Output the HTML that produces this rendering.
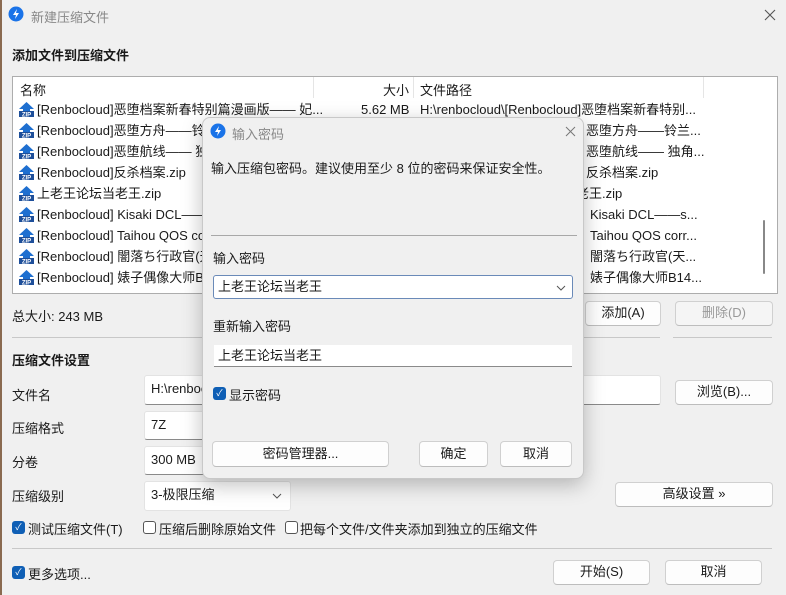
<!DOCTYPE html>
<html><head><meta charset="utf-8"><style>
*{margin:0;padding:0;box-sizing:border-box}
body{width:786px;height:595px;background:#f0f0f0;font-family:"Liberation Sans","Noto Sans CJK SC",sans-serif;font-size:13px;color:#1a1a1a;position:relative;overflow:hidden}
.a{position:absolute;white-space:nowrap}
.b{font-weight:bold}
.btn{position:absolute;background:#fdfdfd;border:1px solid #d0d0d0;border-bottom-color:#bdbdbd;border-radius:4px;text-align:center;line-height:22px}
.inp{position:absolute;background:#fff;border:1px solid #e3e3e3;border-bottom:1px solid #8a8a8a;border-radius:3px;padding-left:6px;line-height:26px}
.cb{position:absolute;width:13px;height:13px;border-radius:3px;background:#0f5fb5;color:#fff;font-size:9px;line-height:13px;text-align:center}
.cbo{position:absolute;width:13px;height:13px;border-radius:3px;border:1px solid #555;background:#fff}
.row{position:absolute;left:17px;height:21px;line-height:21px;white-space:nowrap}
.hl{position:absolute;height:1px;background:#c8c8c8}
</style></head><body>
<div class="a" style="left:0;top:0;width:2px;height:595px;background:#8a6a50"></div>
<svg class="a" style="left:8px;top:6px" width="16" height="16"><circle cx="8" cy="8" r="7.5" fill="#1a73e8"/><path d="M9 3 L5 9 H8 L7 13 L11 7 H8 Z" fill="#fff"/></svg>
<div class="a" style="left:31px;top:7px;color:#888;font-size:13px">新建压缩文件</div>
<svg class="a" style="left:764px;top:9px" width="12" height="12"><path d="M1 1L11 11M11 1L1 11" stroke="#555" stroke-width="1.1"/></svg>
<div class="a b" style="left:12px;top:45px">添加文件到压缩文件</div>
<div class="a" style="left:12px;top:76px;width:766px;height:218px;background:#fff;border:1px solid #adadad"></div>
<div class="a" style="left:20px;top:80px">名称</div>
<div class="a" style="left:313px;top:77px;width:1px;height:21px;background:#e5e5e5"></div>
<div class="a" style="left:383px;top:80px">大小</div>
<div class="a" style="left:413px;top:77px;width:1px;height:21px;background:#e5e5e5"></div>
<div class="a" style="left:420px;top:80px">文件路径</div>
<div class="a" style="left:703px;top:77px;width:1px;height:21px;background:#e5e5e5"></div>
<div class="a" style="left:763px;top:220px;width:2px;height:54px;background:#888;border-radius:1px"></div>
<div id="rows"></div>
<script>
var n=["[Renbocloud]恶堕档案新春特别篇漫画版—— 妃...","[Renbocloud]恶堕方舟——铃兰...","[Renbocloud]恶堕航线—— 独角...","[Renbocloud]反杀档案.zip","上老王论坛当老王.zip","[Renbocloud] Kisaki DCL——s...","[Renbocloud] Taihou QOS corr...","[Renbocloud] 闇落ち行政官(天...","[Renbocloud] 婊子偶像大师B14..."];
var p=["H:\\renbocloud\\[Renbocloud]恶堕档案新春特别...","恶堕方舟——铃兰...","恶堕航线—— 独角...","反杀档案.zip","老王.zip","Kisaki DCL——s...","Taihou QOS corr...","闇落ち行政官(天...","婊子偶像大师B14..."];
var h="";for(var i=0;i<9;i++){var y=99+i*21;
h+='<svg class="a" style="left:18px;top:'+(y+2)+'px" width="17" height="17"><path d="M8.5 1 L16 8 H12 V10 H5 V8 H1 Z" fill="#1e6fd0"/><rect x="1" y="10" width="15" height="6" fill="#1e4f9a"/><text x="8.5" y="15.5" font-size="6" fill="#fff" text-anchor="middle" font-family="Liberation Sans" font-weight="bold">ZIP</text></svg>';
h+='<div class="row" style="left:37px;top:'+y+'px">'+n[i]+'</div>';
h+='<div class="row" style="left:'+(i==0?420:(i==4?576:(i>=5?590:586)))+'px;top:'+y+'px">'+p[i]+'</div>';}
h+='<div class="row" style="left:361px;top:99px">5.62 MB</div>';
document.getElementById('rows').innerHTML=h;
</script>
<div class="a" style="left:12px;top:306px">总大小: 243 MB</div>
<div class="btn" style="left:585px;top:301px;width:76px;height:25px">添加(A)</div>
<div class="btn" style="left:675px;top:301px;width:98px;height:25px;color:#999;background:#f5f5f5">删除(D)</div>
<div class="hl" style="left:12px;top:337px;width:648px"></div>
<div class="hl" style="left:673px;top:337px;width:99px"></div>
<div class="a b" style="left:12px;top:350px">压缩文件设置</div>
<div class="a" style="left:12px;top:385px">文件名</div>
<div class="inp" style="left:144px;top:375px;width:517px;height:30px">H:\renbocloud</div>
<div class="btn" style="left:675px;top:380px;width:98px;height:25px">浏览(B)...</div>
<div class="a" style="left:12px;top:418px">压缩格式</div>
<div class="inp" style="left:144px;top:411px;width:80px;height:29px">7Z</div>
<div class="a" style="left:12px;top:452px">分卷</div>
<div class="inp" style="left:144px;top:446px;width:80px;height:29px">300 MB</div>
<div class="a" style="left:12px;top:486px">压缩级别</div>
<div class="inp" style="left:144px;top:481px;width:147px;height:30px;border-bottom-color:#e3e3e3">3-极限压缩<svg style="position:absolute;right:8px;top:11px" width="10" height="6"><path d="M1 1L5 5L9 1" stroke="#555" fill="none"/></svg></div>
<div class="btn" style="left:615px;top:482px;width:158px;height:25px">高级设置 »</div>
<div class="cb" style="left:12px;top:521px">✓</div><div class="a" style="left:28px;top:519px">测试压缩文件(T)</div>
<div class="cbo" style="left:143px;top:521px"></div><div class="a" style="left:159px;top:519px">压缩后删除原始文件</div>
<div class="cbo" style="left:285px;top:521px"></div><div class="a" style="left:300px;top:519px">把每个文件/文件夹添加到独立的压缩文件</div>
<div class="hl" style="left:12px;top:548px;width:760px"></div>
<div class="cb" style="left:12px;top:566px">✓</div><div class="a" style="left:28px;top:564px">更多选项...</div>
<div class="btn" style="left:553px;top:560px;width:97px;height:25px">开始(S)</div>
<div class="btn" style="left:665px;top:560px;width:97px;height:25px">取消</div>

<div class="a" style="left:202px;top:117px;width:382px;height:362px;background:#f0f0f0;border:1px solid #c8c8c8;border-radius:8px;box-shadow:0 6px 20px rgba(0,0,0,.25)"></div>
<svg class="a" style="left:210px;top:123px" width="16" height="16"><circle cx="8" cy="8" r="7.5" fill="#1a73e8"/><path d="M9 3 L5 9 H8 L7 13 L11 7 H8 Z" fill="#fff"/></svg>
<div class="a" style="left:232px;top:124px;color:#888">输入密码</div>
<svg class="a" style="left:565px;top:126px" width="11" height="11"><path d="M1 1L10 10M10 1L1 10" stroke="#777" stroke-width="1"/></svg>
<div class="a" style="left:211px;top:158px">输入压缩包密码。建议使用至少 8 位的密码来保证安全性。</div>
<div class="a" style="left:211px;top:235px;width:366px;height:1px;background:#a8a8a8"></div>
<div class="a" style="left:213px;top:248px">输入密码</div>
<div class="a" style="left:213px;top:275px;width:360px;height:24px;background:#fff;border:1px solid #6a8ab8;border-radius:3px;padding-left:4px;line-height:22px">上老王论坛当老王<svg style="position:absolute;right:6px;top:9px" width="10" height="6"><path d="M1 1L5 5L9 1" stroke="#555" fill="none"/></svg></div>
<div class="a" style="left:213px;top:316px">重新输入密码</div>
<div class="a" style="left:214px;top:345px;width:358px;height:22px;background:#fff;border-bottom:1px solid #8a8a8a;padding-left:4px;line-height:21px">上老王论坛当老王</div>
<div class="cb" style="left:213px;top:387px">✓</div><div class="a" style="left:229px;top:385px">显示密码</div>
<div class="btn" style="left:212px;top:441px;width:177px;height:26px;line-height:24px">密码管理器...</div>
<div class="btn" style="left:419px;top:441px;width:69px;height:26px;line-height:24px">确定</div>
<div class="btn" style="left:500px;top:441px;width:72px;height:26px;line-height:24px">取消</div>
</body></html>
